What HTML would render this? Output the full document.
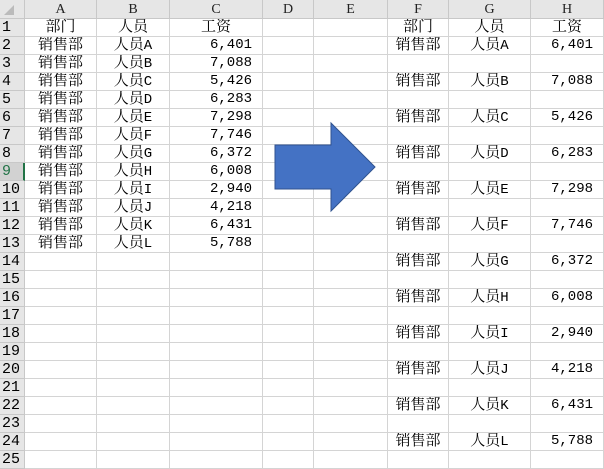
<!DOCTYPE html><html><head><meta charset="utf-8"><style>
body{margin:0;width:604px;height:460px;overflow:hidden;background:#fff;font-family:"Liberation Mono","Noto Serif CJK SC",monospace;font-size:15px;color:#000;position:relative}
.r{display:grid;grid-template-columns:25px 72px 73px 93px 51px 74px 61px 82px 73px;height:18px;overflow:hidden}
.r>div{box-sizing:border-box;height:18px;border-right:1px solid #d4d4d4;border-bottom:1px solid #d4d4d4;line-height:17px;text-align:center;white-space:nowrap;overflow:hidden}
.hd{height:19px}
.hd>div{height:19px;background:#e6e6e6;border-color:#c8c8c8;color:#222;font-family:"Liberation Serif",serif;font-size:14px;line-height:19px}
.r>div:first-child{background:#e6e6e6;border-color:#c8c8c8;text-align:left;padding-left:2px}
.r>div.sel{background:#d2d2d2;color:#217346;border-right:2px solid #217346}
.r>div.v{text-align:right;padding-right:10px;font-size:14px}
.n{font-size:14px}
</style></head><body>
<div class="r hd"><div><svg width="10" height="10" style="position:relative;left:2px;top:2px"><polygon points="10,0 10,10 0,10" fill="#bbb"/></svg></div><div>A</div><div>B</div><div>C</div><div>D</div><div>E</div><div>F</div><div>G</div><div>H</div></div>
<div class="r"><div>1</div><div>部门</div><div>人员</div><div>工资</div><div></div><div></div><div>部门</div><div>人员</div><div>工资</div></div>
<div class="r"><div>2</div><div>销售部</div><div>人员<span class="n">A</span></div><div class="v">6,401</div><div></div><div></div><div>销售部</div><div>人员<span class="n">A</span></div><div class="v">6,401</div></div>
<div class="r"><div>3</div><div>销售部</div><div>人员<span class="n">B</span></div><div class="v">7,088</div><div></div><div></div><div></div><div></div><div></div></div>
<div class="r"><div>4</div><div>销售部</div><div>人员<span class="n">C</span></div><div class="v">5,426</div><div></div><div></div><div>销售部</div><div>人员<span class="n">B</span></div><div class="v">7,088</div></div>
<div class="r"><div>5</div><div>销售部</div><div>人员<span class="n">D</span></div><div class="v">6,283</div><div></div><div></div><div></div><div></div><div></div></div>
<div class="r"><div>6</div><div>销售部</div><div>人员<span class="n">E</span></div><div class="v">7,298</div><div></div><div></div><div>销售部</div><div>人员<span class="n">C</span></div><div class="v">5,426</div></div>
<div class="r"><div>7</div><div>销售部</div><div>人员<span class="n">F</span></div><div class="v">7,746</div><div></div><div></div><div></div><div></div><div></div></div>
<div class="r"><div>8</div><div>销售部</div><div>人员<span class="n">G</span></div><div class="v">6,372</div><div></div><div></div><div>销售部</div><div>人员<span class="n">D</span></div><div class="v">6,283</div></div>
<div class="r"><div class="sel">9</div><div>销售部</div><div>人员<span class="n">H</span></div><div class="v">6,008</div><div></div><div></div><div></div><div></div><div></div></div>
<div class="r"><div>10</div><div>销售部</div><div>人员<span class="n">I</span></div><div class="v">2,940</div><div></div><div></div><div>销售部</div><div>人员<span class="n">E</span></div><div class="v">7,298</div></div>
<div class="r"><div>11</div><div>销售部</div><div>人员<span class="n">J</span></div><div class="v">4,218</div><div></div><div></div><div></div><div></div><div></div></div>
<div class="r"><div>12</div><div>销售部</div><div>人员<span class="n">K</span></div><div class="v">6,431</div><div></div><div></div><div>销售部</div><div>人员<span class="n">F</span></div><div class="v">7,746</div></div>
<div class="r"><div>13</div><div>销售部</div><div>人员<span class="n">L</span></div><div class="v">5,788</div><div></div><div></div><div></div><div></div><div></div></div>
<div class="r"><div>14</div><div></div><div></div><div></div><div></div><div></div><div>销售部</div><div>人员<span class="n">G</span></div><div class="v">6,372</div></div>
<div class="r"><div>15</div><div></div><div></div><div></div><div></div><div></div><div></div><div></div><div></div></div>
<div class="r"><div>16</div><div></div><div></div><div></div><div></div><div></div><div>销售部</div><div>人员<span class="n">H</span></div><div class="v">6,008</div></div>
<div class="r"><div>17</div><div></div><div></div><div></div><div></div><div></div><div></div><div></div><div></div></div>
<div class="r"><div>18</div><div></div><div></div><div></div><div></div><div></div><div>销售部</div><div>人员<span class="n">I</span></div><div class="v">2,940</div></div>
<div class="r"><div>19</div><div></div><div></div><div></div><div></div><div></div><div></div><div></div><div></div></div>
<div class="r"><div>20</div><div></div><div></div><div></div><div></div><div></div><div>销售部</div><div>人员<span class="n">J</span></div><div class="v">4,218</div></div>
<div class="r"><div>21</div><div></div><div></div><div></div><div></div><div></div><div></div><div></div><div></div></div>
<div class="r"><div>22</div><div></div><div></div><div></div><div></div><div></div><div>销售部</div><div>人员<span class="n">K</span></div><div class="v">6,431</div></div>
<div class="r"><div>23</div><div></div><div></div><div></div><div></div><div></div><div></div><div></div><div></div></div>
<div class="r"><div>24</div><div></div><div></div><div></div><div></div><div></div><div>销售部</div><div>人员<span class="n">L</span></div><div class="v">5,788</div></div>
<div class="r"><div>25</div><div></div><div></div><div></div><div></div><div></div><div></div><div></div><div></div></div>
<svg width="604" height="460" style="position:absolute;left:0;top:0">
<polygon points="275,145 331,145 331,123 375,167 331,211 331,189 275,189" fill="#4472C4" stroke="#2F528F" stroke-width="1"/>
</svg>
</body></html>
